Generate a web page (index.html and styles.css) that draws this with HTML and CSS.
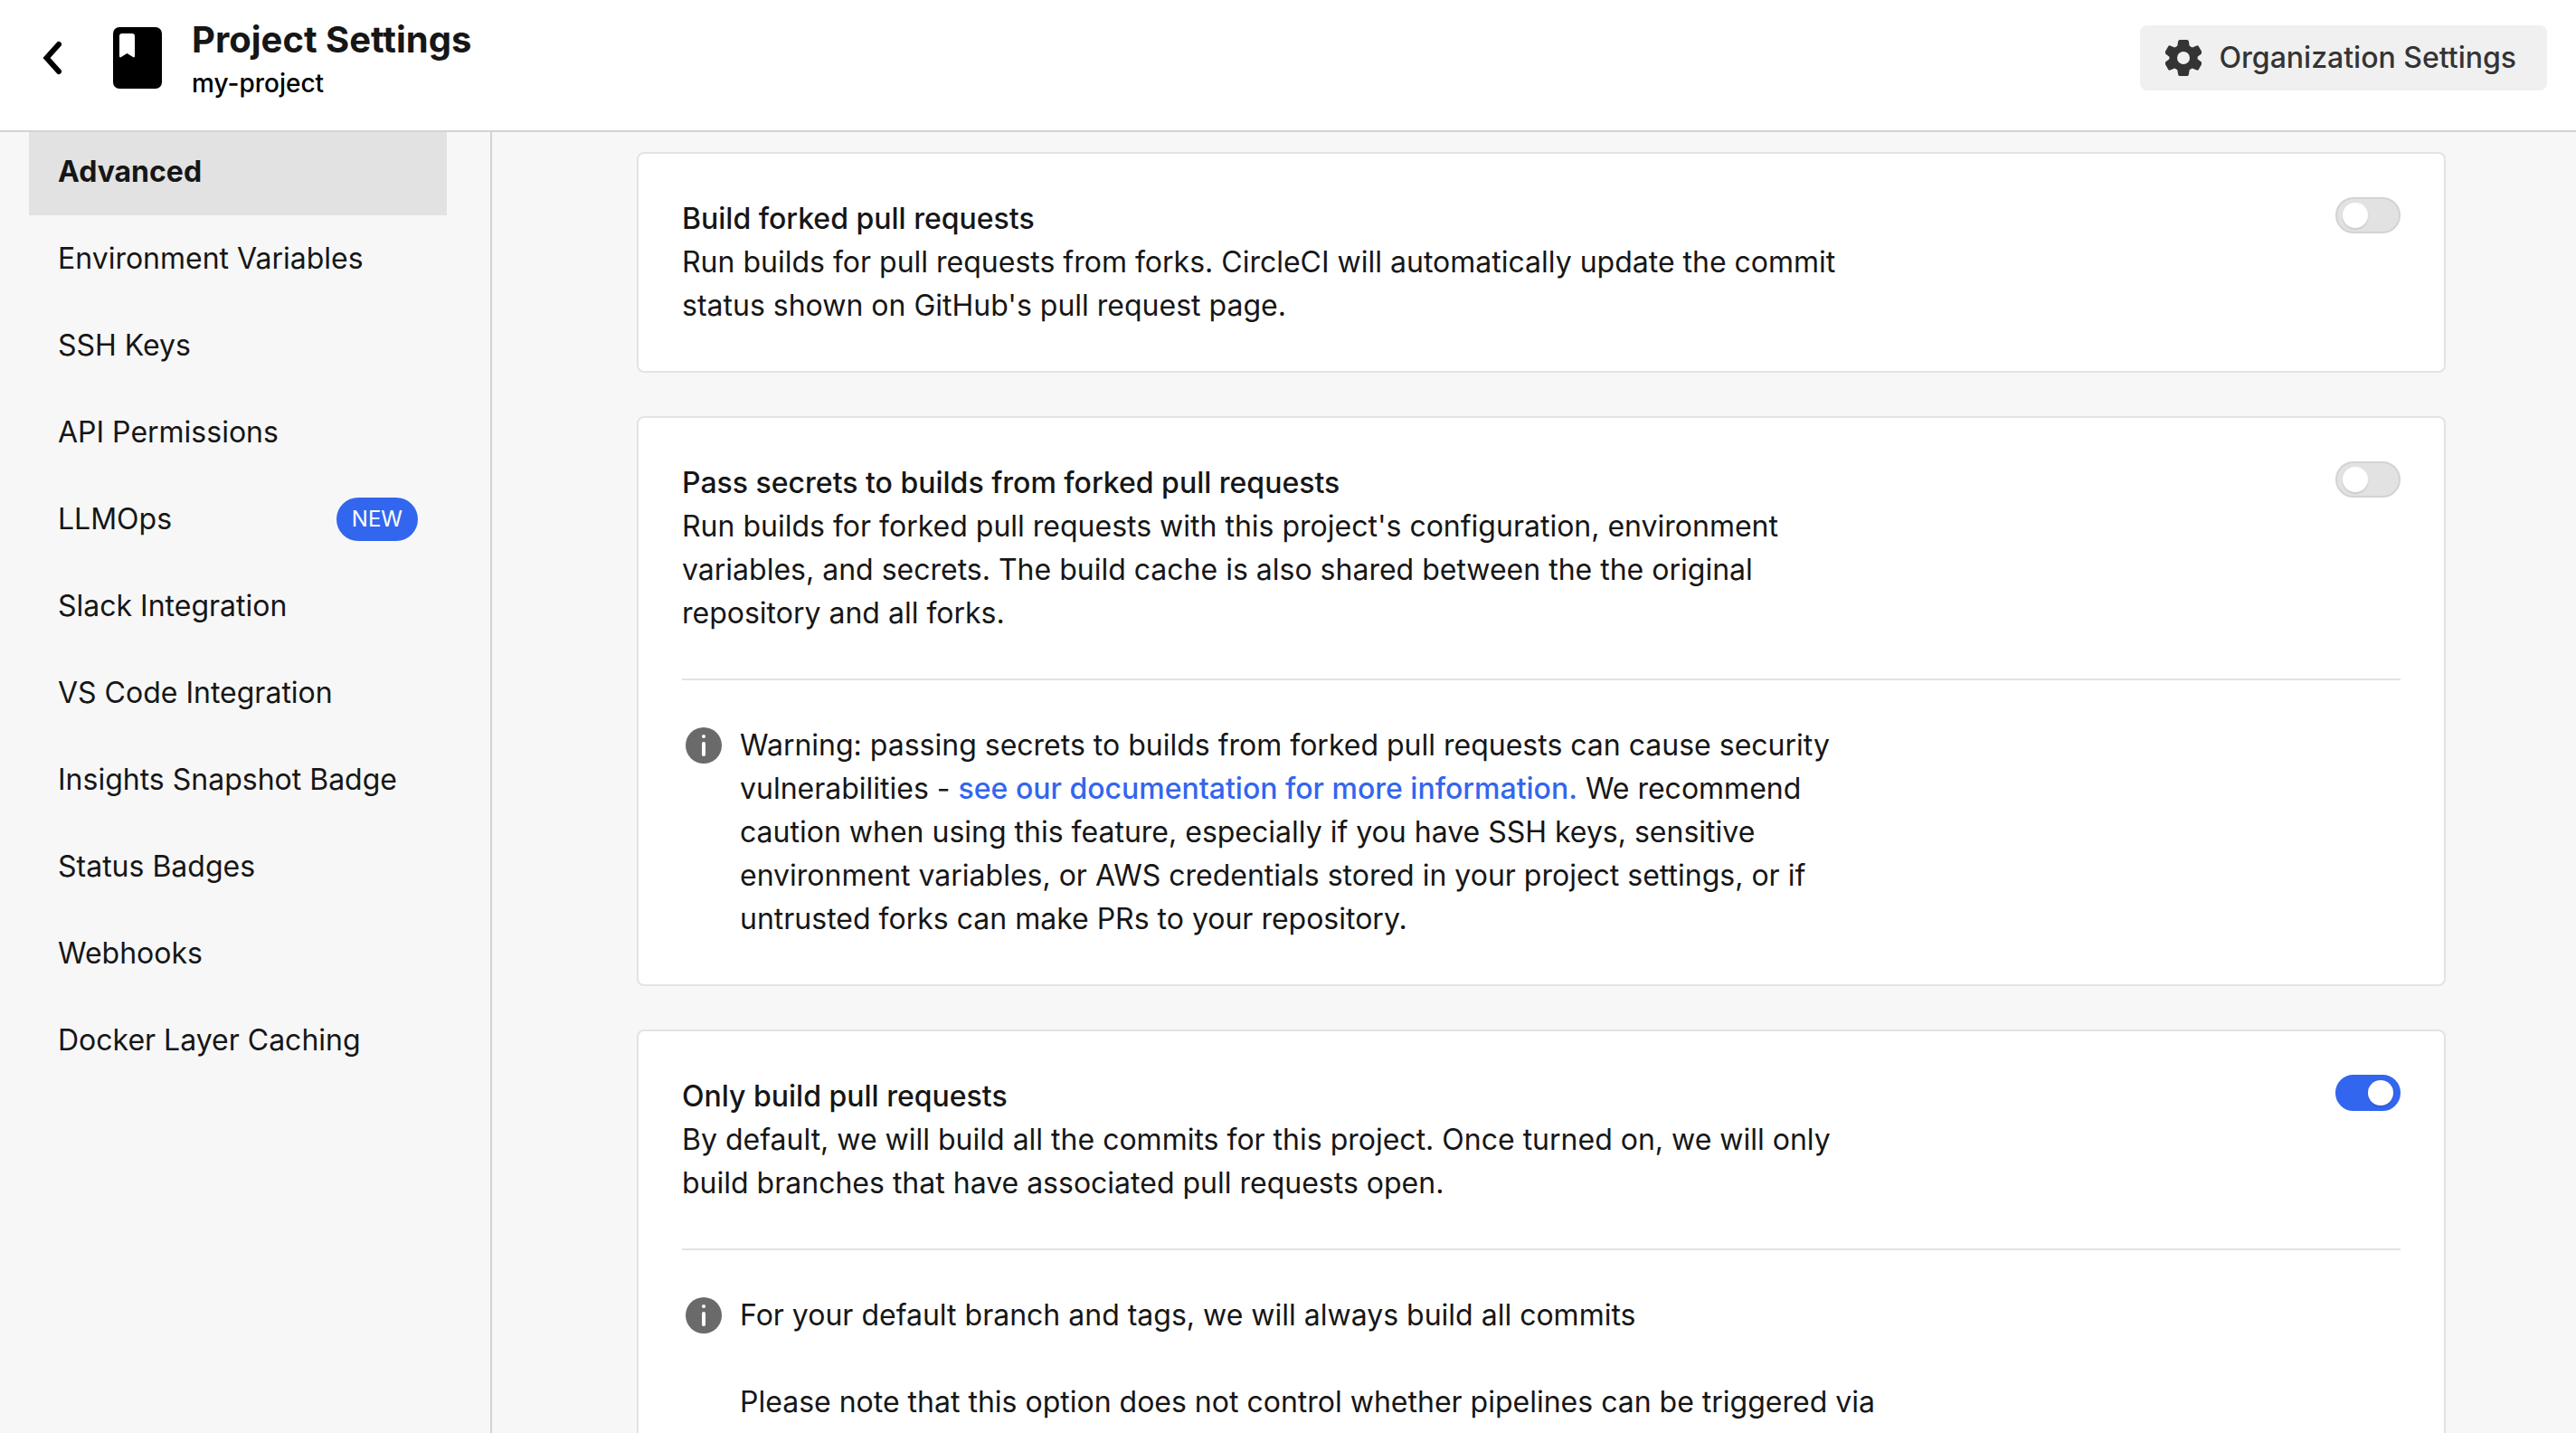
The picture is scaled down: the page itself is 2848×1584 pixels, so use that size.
FILE: index.html
```html
<!DOCTYPE html>
<html lang="en">
<head>
<meta charset="utf-8">
<title>Project Settings</title>
<link rel="stylesheet" href="styles.css">
</head>
<body>
<header class="header">
  <a class="back" href="#" aria-label="Back">
    <svg class="back-icon" viewBox="0 0 24 40" aria-hidden="true"><path d="M19 5 5.500 20 19 35" fill="none" stroke="#000" stroke-width="6" stroke-linecap="round" stroke-linejoin="miter"/></svg>
  </a>
  <svg class="book-icon" viewBox="0 0 54 68" aria-hidden="true"><path fill-rule="evenodd" d="M7 0h40a7 7 0 0 1 7 7v54a7 7 0 0 1-7 7H7a7 7 0 0 1-7-7V7a7 7 0 0 1 7-7Zm3 7a3 3 0 0 0-3 3v22c0 1 1 2 2 1l6.500-4 6.500 4c1 1 2 0 2-1V10a3 3 0 0 0-3-3Z"/></svg>
  <div class="titles">
    <h1 class="title">Project Settings</h1>
    <p class="project">my-project</p>
  </div>
  <button class="org-button" type="button">
    <svg class="gear-icon" viewBox="0 0 40 40" aria-hidden="true"><path fill="#343434" fill-rule="evenodd" d="M16 0h8q1.500 0 1.800 1.500l.9 5.200 3 1.700 5-1.900q1.400-.5 2.100.8l3.400 5.900q.7 1.300-.4 2.200l-4.200 3.400v2.400l4.200 3.400q1.100.9.400 2.200l-3.400 5.900q-.7 1.300-2.100.8l-5-1.900-3 1.700-.9 5.200Q25.500 40 24 40h-8q-1.500 0-1.800-1.500l-.9-5.200-3-1.700-5 1.900q-1.400.5-2.100-.8L-.2 26.800q-.7-1.300.4-2.200l4.200-3.400v-2.400L.2 15.400q-1.100-.9-.4-2.200l3.400-5.900q.7-1.300 2.100-.8l5 1.900 3-1.700.9-5.200Q14.500 0 16 0Zm4 13a7 7 0 1 0 0 14 7 7 0 0 0 0-14Z"/></svg>
    Organization Settings
  </button>
</header>
<div class="layout">
  <nav class="sidebar" aria-label="Project settings">
    <a class="nav-item nav-item-active" href="#" aria-current="page">Advanced</a>
    <a class="nav-item" href="#">Environment Variables</a>
    <a class="nav-item" href="#">SSH Keys</a>
    <a class="nav-item" href="#">API Permissions</a>
    <a class="nav-item" href="#">LLMOps <span class="badge">NEW</span></a>
    <a class="nav-item" href="#">Slack Integration</a>
    <a class="nav-item" href="#">VS Code Integration</a>
    <a class="nav-item" href="#">Insights Snapshot Badge</a>
    <a class="nav-item" href="#">Status Badges</a>
    <a class="nav-item" href="#">Webhooks</a>
    <a class="nav-item" href="#">Docker Layer Caching</a>
  </nav>
  <main class="main">
    <div class="cards">
      <section class="card">
        <div class="setting">
          <div class="setting-text">
            <label class="setting-title" for="forked">Build forked pull requests</label>
            <p>Run builds for pull requests from forks. CircleCI will automatically update the commit status shown on GitHub's pull request page.</p>
          </div>
          <input class="toggle" type="checkbox" role="switch" id="forked">
        </div>
      </section>
      <section class="card">
        <div class="setting">
          <div class="setting-text">
            <label class="setting-title" for="secrets">Pass secrets to builds from forked pull requests</label>
            <p>Run builds for forked pull requests with this project's configuration, environment variables, and secrets. The build cache is also shared between the the original repository and all forks.</p>
          </div>
          <input class="toggle" type="checkbox" role="switch" id="secrets">
        </div>
        <div class="notice">
          <svg class="info-icon" viewBox="0 0 40 40" aria-hidden="true"><circle cx="20" cy="20" r="20" fill="#6a6a6a"/><circle cx="20" cy="10" r="2" fill="#fff"/><path d="M20 18v12" stroke="#fff" stroke-width="4" stroke-linecap="round"/></svg>
          <div class="notice-text">
            <p>Warning: passing secrets to builds from forked pull requests can cause security vulnerabilities - <a class="link" href="#">see our documentation for more information.</a> We recommend caution when using this feature, especially if you have SSH keys, sensitive environment variables, or AWS credentials stored in your project settings, or if untrusted forks can make PRs to your repository.</p>
          </div>
        </div>
      </section>
      <section class="card">
        <div class="setting">
          <div class="setting-text">
            <label class="setting-title" for="only-pr">Only build pull requests</label>
            <p>By default, we will build all the commits for this project. Once turned on, we will only build branches that have associated pull requests open.</p>
          </div>
          <input class="toggle" type="checkbox" role="switch" id="only-pr" checked>
        </div>
        <div class="notice">
          <svg class="info-icon" viewBox="0 0 40 40" aria-hidden="true"><circle cx="20" cy="20" r="20" fill="#6a6a6a"/><circle cx="20" cy="10" r="2" fill="#fff"/><path d="M20 18v12" stroke="#fff" stroke-width="4" stroke-linecap="round"/></svg>
          <div class="notice-text">
            <p>For your default branch and tags, we will always build all commits</p>
            <p>Please note that this option does not control whether pipelines can be triggered via</p>
          </div>
        </div>
      </section>
    </div>
  </main>
</div>
</body>
</html>
```

FILE: styles.css
```css
* {
  box-sizing: border-box;
}

body {
  display: flex;
  flex-direction: column;
  height: 100vh;
  margin: 0;
  overflow: hidden;
  background: #f7f7f7;
  color: #161616;
  font-family: Inter, "Liberation Sans", sans-serif;
  font-size: 32px;
  line-height: 48px;
}

h1,
p {
  margin: 0;
}

.header {
  display: flex;
  flex: none;
  align-items: center;
  padding: 16px 32px 32px 46px;
  height: 146px;
  border-bottom: 2px solid #d3d3d3;
  background: #fff;
}

.back {
  display: flex;
}

.back-icon {
  width: 24px;
  height: 40px;
}

.book-icon {
  width: 54px;
  height: 68px;
  margin-left: 55px;
}

.titles {
  margin-left: 33px;
}

.title {
  font-size: 40px;
  font-weight: 700;
  line-height: 56px;
}

.project {
  color: #000;
  font-size: 28px;
  font-weight: 500;
  line-height: 40px;
}

.org-button {
  display: flex;
  align-items: center;
  gap: 20px;
  height: 72px;
  margin-left: auto;
  padding: 0 34px 0 28px;
  border: 0;
  border-radius: 8px;
  background: #f0f0f0;
  color: #343434;
  font: inherit;
  font-weight: 500;
}

.gear-icon {
  width: 40px;
  height: 40px;
}

.layout {
  display: flex;
  flex: 1;
  min-height: 0;
  overflow: hidden;
}

.sidebar {
  flex: none;
  width: 544px;
  padding: 0 48px 0 32px;
  border-right: 2px solid #d3d3d3;
}

.nav-item {
  display: flex;
  align-items: center;
  justify-content: space-between;
  height: 96px;
  padding: 0 32px;
  color: #161616;
  text-decoration: none;
}

.nav-item-active {
  margin-top: -4px;
  background: #e2e2e2;
  font-weight: 700;
}

.badge {
  padding: 0 17px;
  border-radius: 24px;
  background: #3366ee;
  color: #fff;
  font-size: 24px;
}

.main {
  flex: 1;
  padding: 22px 144px 0 160px;
}

.cards {
  display: flex;
  flex-direction: column;
  gap: 48px;
}

.card {
  padding: 48px;
  border: 2px solid #e3e3e3;
  border-radius: 8px;
  background: #fff;
}

.setting {
  display: flex;
  align-items: flex-start;
  justify-content: space-between;
}

.setting-text {
  max-width: 1320px;
}

.setting-title {
  display: block;
  font-weight: 500;
}

.toggle {
  display: flex;
  align-items: center;
  width: 72px;
  height: 40px;
  margin: 0;
  padding: 0 6px;
  appearance: none;
  border: 2px solid #d3d3d3;
  border-radius: 20px;
  background: #e2e2e2;
}

.toggle::before {
  width: 28px;
  height: 28px;
  border-radius: 50%;
  background: #fff;
  box-shadow: 0 2px 2px rgba(0, 0, 0, 0.1);
  content: "";
}

.toggle:checked {
  justify-content: flex-end;
  border-color: #3366ee;
  background: #3366ee;
}

.notice {
  display: flex;
  gap: 20px;
  margin-top: 48px;
  padding: 48px 0 0 4px;
  border-top: 2px solid #e3e3e3;
}

.info-icon {
  flex: none;
  width: 40px;
  height: 40px;
  margin-top: 4px;
}

.notice-text {
  display: flex;
  flex-direction: column;
  gap: 48px;
  max-width: 1272px;
}

.link {
  color: #3366ee;
  font-weight: 500;
  text-decoration: none;
}
```
